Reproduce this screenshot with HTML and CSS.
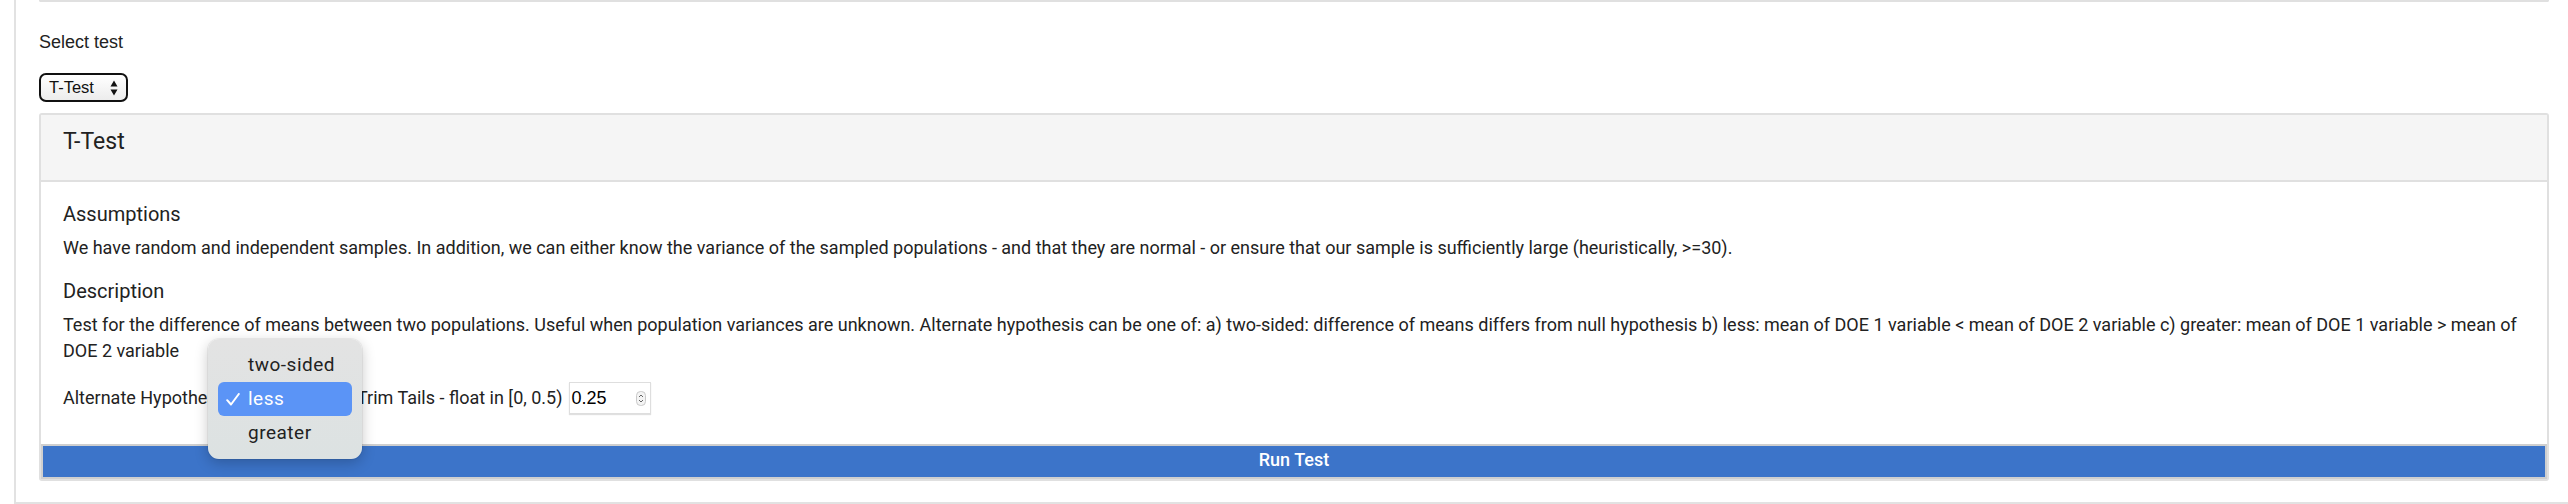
FILE: index.html
```html
<!DOCTYPE html>
<html lang="en">
<head>
<meta charset="utf-8">
<title>Select test</title>
<link rel="stylesheet" href="styles.css">
</head>
<body>
<div class="outer">
  <div class="topbox"></div>
  <div class="select-label">Select test</div>
  <div class="test-select">
    <span>T-Test</span>
    <svg class="updown" width="8" height="16" viewBox="0 0 8 16"><path d="M4 0.5 L7.5 6.5 L0.5 6.5 Z M4 15.5 L7.5 9.5 L0.5 9.5 Z" fill="#111"/></svg>
  </div>
  <div class="card">
    <div class="card-header">T-Test</div>
    <div class="card-body">
      <h4 class="sub">Assumptions</h4>
      <p class="text">We have random and independent samples. In addition, we can either know the variance of the sampled populations - and that they are normal - or ensure that our sample is sufficiently large (heuristically, &gt;=30).</p>
      <h4 class="sub gap">Description</h4>
      <p class="text">Test for the difference of means between two populations. Useful when population variances are unknown. Alternate hypothesis can be one of: a) two-sided: difference of means differs from null hypothesis b) less: mean of DOE 1 variable &lt; mean of DOE 2 variable c) greater: mean of DOE 1 variable &gt; mean of DOE 2 variable</p>
      <div class="params">
        <div class="alt-field">
          <span class="plabel">Alternate Hypothesis</span>
          <span class="alt-select">less</span>
        </div>
        <span class="plabel">Trim Tails - float in [0, 0.5)</span>
        <div class="num">
          <span class="num-val">0.25</span>
          <svg class="spin" width="10" height="15" viewBox="0 0 10 15"><rect x="0.5" y="0.5" width="9" height="14" rx="4" fill="#f4f4f4" stroke="#c9c9c9"/><path d="M3 6 L5 4 L7 6 M3 9 L5 11 L7 9" fill="none" stroke="#666" stroke-width="1"/></svg>
        </div>
        <div class="menu">
          <div class="opt">two-sided</div>
          <div class="opt sel"><svg class="check" width="14" height="13" viewBox="0 0 14 13"><path d="M1.2 7.2 L5 11.5 L12.8 1" fill="none" stroke="#fff" stroke-width="2" stroke-linecap="round" stroke-linejoin="round"/></svg>less</div>
          <div class="opt">greater</div>
        </div>
      </div>
    </div>
    <div class="run">Run Test</div>
  </div>
</div>
</body>
</html>
```
FILE: styles.css
```css
html, body {
  margin: 0;
  padding: 0;
  background: #fff;
  overflow: hidden;
}
body {
  font-family: Roboto, "Liberation Sans", sans-serif;
  color: #222;
}
.outer {
  margin-left: 14px;
  border-left: 2px solid #e2e2e2;
  border-bottom: 2px solid #e2e2e2;
  padding: 0 19px 21px 23px;
  height: 481px;
}
.topbox {
  height: 0;
  border: 2px solid #e0e0e0;
  border-top: none;
  border-radius: 0 0 4px 4px;
}
.select-label {
  margin-top: 30px;
  font-family: "Liberation Sans", Arial, sans-serif;
  font-size: 18px;
  line-height: 20px;
  color: #222;
}
.test-select {
  margin-top: 21px;
  width: 89px;
  height: 29px;
  box-sizing: border-box;
  border: 2px solid #111;
  border-radius: 7px;
  background: linear-gradient(#ffffff, #ececec);
  display: flex;
  align-items: center;
  justify-content: space-between;
  padding: 0 8px 0 8px;
  font-family: "Liberation Sans", Arial, sans-serif;
  font-size: 16.5px;
  color: #111;
}
.updown { display: block; }
.card {
  margin-top: 11px;
  border: 2px solid #e0e0e0;
  border-radius: 3px;
}
.card-header {
  background: #f5f5f5;
  border-bottom: 2px solid #e0e0e0;
  padding: 13px 22px 24px;
  font-size: 23px;
  line-height: 28px;
  color: #222;
}
.card-body {
  padding: 19px 22px 30px;
}
.sub {
  margin: 0;
  font-weight: 400;
  font-size: 20px;
  line-height: 26px;
}
.sub.gap { margin-top: 17px; }
.text {
  margin: 8px 0 0;
  font-size: 18px;
  line-height: 26px;
}
.params {
  position: relative;
  margin-top: 18px;
  height: 32px;
  display: flex;
  align-items: center;
  gap: 6px;
  font-size: 18px;
  line-height: 26px;
}
.alt-field {
  width: 288px;
  display: flex;
  align-items: center;
  gap: 6px;
}
.alt-select {
  font-size: 16px;
}
.num {
  width: 82px;
  height: 32px;
  box-sizing: border-box;
  border: 1px solid #dedede;
  box-shadow: 0 1px 1px rgba(0,0,0,0.12);
  display: flex;
  align-items: center;
  justify-content: space-between;
  padding: 0 4px 0 2px;
  background: #fff;
}
.num-val {
  font-family: "Liberation Sans", Arial, sans-serif;
  font-size: 18px;
  color: #000;
}
.spin { display: block; }
.menu {
  position: absolute;
  left: 145px;
  top: -43px;
  width: 154px;
  height: 120px;
  box-sizing: border-box;
  padding: 9px 10px;
  border-radius: 11px;
  background: linear-gradient(#e3e3e3, #dce2e2);
  box-shadow: 0 4px 14px rgba(0,0,0,0.22), 0 0 0 1px rgba(0,0,0,0.05);
}
.opt {
  height: 34px;
  line-height: 34px;
  padding-left: 30px;
  font-size: 19px;
  letter-spacing: 0.5px;
  color: #222;
  border-radius: 6px;
  position: relative;
}
.opt.sel {
  background: #5b94f6;
  color: #fff;
}
.check {
  position: absolute;
  left: 8px;
  top: 11px;
  display: block;
}
.run {
  background: #3c74c9;
  border: 2px solid #cfcfcf;
  color: #fff;
  text-align: center;
  font-size: 18px;
  font-weight: 500;
  line-height: 27px;
  padding: 0 0 4px;
}
```
